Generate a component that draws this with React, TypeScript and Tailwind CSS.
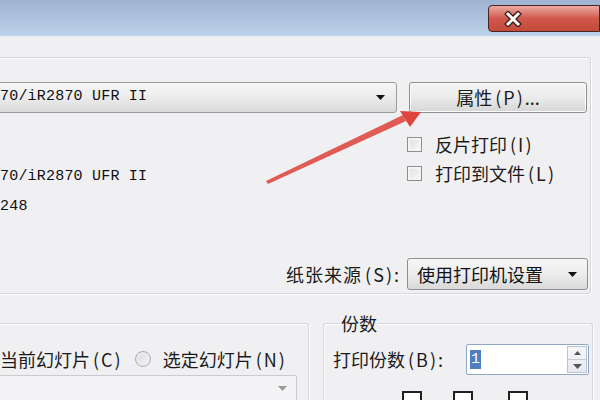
import React from "react"

const cjk = "font-['Noto_Sans_CJK_SC','Noto_Sans',sans-serif]"
const mono = "font-['Liberation_Mono',monospace]"

function Arrow({ color = "#111" }: { color?: string }) {
  return (
    <svg width="9" height="5" viewBox="0 0 9 5">
      <path d="M0 0 L9 0 L4.5 5 Z" fill={color} />
    </svg>
  )
}

// label like 反片打印(I): the ascii part is wider in the original font
function Lbl({ text, hot, tail = "" }: { text: string; hot: string; tail?: string }) {
  return (
    <span className="whitespace-nowrap text-[18px] text-[#1b1b1b]">
      {text}
      <span className="ml-[3px] tracking-[2px]">({hot})</span>
      {tail}
    </span>
  )
}

function Checkbox({ text, hot }: { text: string; hot: string }) {
  return (
    <div className="flex h-[29px] items-center">
      <span className="h-[15px] w-[15px] shrink-0 border border-[#8e8f8f] bg-gradient-to-br from-[#dcdcdc] to-[#fbfbfb] shadow-[inset_0_0_0_2px_#f4f4f4]" />
      <span className="ml-[13px]">
        <Lbl text={text} hot={hot} />
      </span>
    </div>
  )
}

export default function App() {
  return (
    <div className={`relative h-[400px] w-[600px] overflow-hidden bg-[#f0f0f3] ${cjk}`}>
      {/* title bar */}
      <div className="flex h-[37px] justify-end border-b border-[#e4ebf4] bg-gradient-to-b from-[#9fb3d1] to-[#bdd2ea]">
        <div className="mt-[5px] flex h-[27px] w-[112px] items-center rounded-l-[4px] border border-[#4a2323] bg-gradient-to-b from-[#e9aaa2] via-[#d0574b] to-[#c44a3a] pl-[15px]">
          <svg width="18" height="16" viewBox="0 0 18 16">
            <path d="M4 3 L14 13 M14 3 L4 13" stroke="#3b1a16" strokeWidth="5.5" strokeLinecap="square" />
            <path d="M4 3 L14 13 M14 3 L4 13" stroke="#fff" strokeWidth="3" strokeLinecap="square" />
          </svg>
        </div>
      </div>
      <div className="h-[20px]" />

      {/* printer group */}
      <div className="ml-[-10px] h-[237px] w-[601px] rounded-[3px] border border-[#d3d6dc] shadow-[inset_1px_1px_0_#fff,1px_1px_0_#fff]">
        <div className="ml-[9px] w-[589px] pt-[24px]">
          <div className="flex h-[31px]">
            <div className="ml-[-20px] flex h-[31px] w-[417px] shrink-0 items-center justify-between rounded-[3px] border border-[#9c9c9c] bg-gradient-to-b from-[#f6f6f6] via-[#ececec] to-[#d9d9d9] pl-[19px] pr-[11px]">
              <span className={`text-[15px] tracking-[0.2px] text-[#111] ${mono}`}>70/iR2870 UFR II</span>
              <Arrow />
            </div>
            <button className="ml-[12px] flex h-[31px] w-[178px] shrink-0 items-center justify-center rounded-[3px] border border-[#8e8f8f] bg-gradient-to-b from-[#f4f4f4] via-[#ebebeb] to-[#d6d6d6] shadow-[inset_0_0_0_1px_#fcfcfc]">
              <Lbl text="属性" hot="P" tail="..." />
            </button>
          </div>

          <div className="flex h-[145px]">
            <div className={`w-[407px] shrink-0 pt-[49px] text-[15px] leading-[30px] tracking-[0.2px] text-[#111] ${mono}`}>
              <div>70/iR2870 UFR II</div>
              <div>248</div>
            </div>
            <div className="pt-[17px]">
              <Checkbox text="反片打印" hot="I" />
              <Checkbox text="打印到文件" hot="L" />
            </div>
          </div>

          <div className="flex h-[32px] items-center justify-end">
            <span className="mr-[7px] tracking-[1px]">
              <Lbl text="纸张来源" hot="S" tail=":" />
            </span>
            <div className="mr-[1px] flex h-[32px] w-[181px] shrink-0 items-center justify-between rounded-[3px] border border-[#8e8f8f] bg-gradient-to-b from-[#f6f6f6] via-[#ececec] to-[#d9d9d9] pl-[9px] pr-[10px]">
              <span className="text-[18px] text-[#111]">使用打印机设置</span>
              <Arrow />
            </div>
          </div>
        </div>
      </div>

      {/* lower groups */}
      <div className="mt-[29px] flex">
        <div className="ml-[-10px] h-[90px] w-[319px] shrink-0 rounded-t-[3px] border border-b-0 border-[#d3d6dc] shadow-[inset_1px_1px_0_#fff,1px_1px_0_#fff]">
          <div className="ml-[9px]">
            <div className="mt-[23px] flex h-[24px] items-center">
              <Lbl text="当前幻灯片" hot="C" />
              <span className="ml-[12px] h-[16px] w-[16px] shrink-0 rounded-full border border-[#a9acb0] bg-gradient-to-br from-[#d6d8db] to-[#f8f8f8] shadow-[inset_0_0_0_2px_#ececec]" />
              <span className="ml-[12px]">
                <Lbl text="选定幻灯片" hot="N" />
              </span>
            </div>
            <div className="ml-[-20px] mt-[4px] flex h-[26px] w-[317px] items-center justify-end rounded-[2px] border border-[#c9cbcf] bg-[#f4f4f6] pr-[9px]">
              <Arrow color="#9a9a9a" />
            </div>
          </div>
        </div>

        <div className="ml-[14px] h-[90px] w-[270px] shrink-0 rounded-t-[3px] border border-b-0 border-[#d3d6dc] pl-[9px] pr-[3px] shadow-[inset_1px_1px_0_#fff,1px_1px_0_#fff]">
          <div className="mt-[-12px] flex">
            <span className="ml-[7px] bg-[#f0f0f3] px-[1px] text-[18px] leading-[22px] text-[#1b1b1b]">份数</span>
          </div>
          <div className="mt-[10px] flex h-[31px] items-center">
            <Lbl text="打印份数" hot="B" tail=":" />
            <div className="ml-auto flex h-[31px] w-[123px] shrink-0 items-center rounded-[2px] border border-[#8fa7c4] bg-white pl-[3px]">
              <span className={`bg-[#4f7fc0] px-[1px] text-[15px] leading-[19px] text-white ${mono}`}>1</span>
              <div className="ml-auto mr-[1px] flex h-[27px] w-[20px] flex-col border border-[#b8c4d4] bg-gradient-to-b from-[#f6f7f9] to-[#e6e9ee]">
                <div className="flex flex-1 items-center justify-center border-b border-[#c4ccd8]">
                  <svg width="7" height="4" viewBox="0 0 7 4"><path d="M0 4 L7 4 L3.5 0 Z" fill="#555" /></svg>
                </div>
                <div className="flex flex-1 items-center justify-center">
                  <Arrow color="#555" />
                </div>
              </div>
            </div>
          </div>
          <div className="mt-[16px] flex">
            <span className="ml-[69px] h-[20px] w-[20px] border-2 border-[#222] bg-white" />
            <span className="ml-[31px] h-[20px] w-[20px] border-2 border-[#222] bg-white" />
            <span className="ml-[35px] h-[20px] w-[20px] border-2 border-[#222] bg-white" />
          </div>
        </div>
      </div>

      {/* red annotation arrow */}
      <svg className="pointer-events-none absolute left-0 top-0" width="600" height="400" viewBox="0 0 600 400">
        <polygon points="266,181 268,184 406,121 403,115" fill="#de4a43" opacity="0.9" />
        <polygon points="421,112 400,111 410,127" fill="#e0453d" />
      </svg>
    </div>
  )
}
